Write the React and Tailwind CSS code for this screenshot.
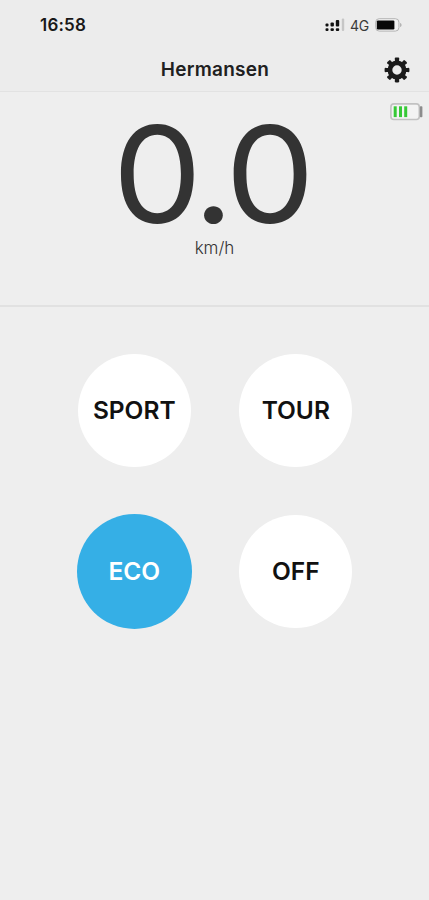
import clsx from "clsx";

const MODES = ["SPORT", "TOUR", "ECO", "OFF"];
const TEETH = [0, 45, 90, 135];

function SignalIcon() {
  return (
    <svg width="20" height="14" viewBox="0 0 20 14" fill="#111">
      <rect x="0.5" y="5.5" width="3" height="3" rx="1" />
      <rect x="5.5" y="4.5" width="3.4" height="4" rx="1" />
      <rect x="10.8" y="2" width="3.4" height="6.5" rx="1" />
      <rect x="16.8" y="0.5" width="2.4" height="12.5" rx="1" fill="#c6c6c6" />
      <rect x="0.5" y="10.2" width="3" height="2.8" rx="1" />
      <rect x="5.5" y="10.2" width="3.4" height="2.8" rx="1" />
      <rect x="10.8" y="10.2" width="3.4" height="2.8" rx="1" />
    </svg>
  );
}

function PhoneBattery() {
  return (
    <svg width="27" height="14" viewBox="0 0 27 14">
      <rect x="0.7" y="0.7" width="23.2" height="12.4" rx="3.5" fill="#f2f2f2" stroke="#b4b4b4" />
      <rect x="1.8" y="2.4" width="17.6" height="9" rx="1.2" fill="#080808" />
      <path d="M25 5v4c1-.3 1.600-1.100 1.600-2S26 5.300 25 5z" fill="#b4b4b4" />
    </svg>
  );
}

function GearIcon() {
  return (
    <svg width="26" height="26" viewBox="-13 -13 26 26" fill="none" stroke="#1b1b1b">
      <circle r="7.1" strokeWidth="4.8" />
      {TEETH.map((angle) => (
        <path
          key={angle}
          d="M0-11V-8M0 11V8"
          strokeWidth="4.2"
          strokeLinecap="butt"
          transform={`rotate(${angle})`}
        />
      ))}
      {TEETH.map((angle) => (
        <path
          key={angle}
          d="M-1.2-11.3H1.2M-1.2 11.3H1.2"
          strokeWidth="2.2"
          strokeLinecap="round"
          transform={`rotate(${angle})`}
        />
      ))}
    </svg>
  );
}

function BikeBattery() {
  return (
    <svg width="33" height="18" viewBox="0 0 33 18">
      <rect x="0.9" y="0.9" width="28.4" height="15.6" rx="3" fill="#f3f3f3" stroke="#c2c2c2" strokeWidth="1.6" />
      <rect x="29.8" y="3.2" width="2.6" height="11" rx="0.8" fill="#8c8c8c" />
      <g fill="#36c936">
        <rect x="3.7" y="3.3" width="3" height="10.8" />
        <rect x="9" y="3.3" width="3" height="10.8" />
        <rect x="14.2" y="3.3" width="3" height="10.8" />
      </g>
    </svg>
  );
}

function StatusBar() {
  return (
    <div className="flex h-[50px] items-center justify-between pr-[27px] pl-[40px]">
      <span className="pt-px text-[17px] font-semibold tracking-[0.2px] text-[#181818]">16:58</span>
      <div className="flex items-center">
        <SignalIcon />
        <span className="mr-[6px] ml-[5px] text-[14px] tracking-[-0.2px] text-[#3a3a3a]">4G</span>
        <PhoneBattery />
      </div>
    </div>
  );
}

function ModeButton({ label, active }) {
  return (
    <button
      className={clsx(
        "grid place-items-center rounded-full text-[24.5px] font-semibold",
        active ? "size-[115px] bg-[#35afe6] text-white" : "size-[113px] bg-white text-[#111]",
      )}
    >
      {label}
    </button>
  );
}

export default function App() {
  return (
    <div className="flex h-[900px] w-[429px] flex-col overflow-hidden bg-[#eee] font-['Inter','Liberation_Sans',sans-serif]">
      <header className="h-[92px] shrink-0 border-b border-[#e2e2e2] bg-[#ececec]">
        <StatusBar />
        <div className="grid h-[39px] grid-cols-[1fr_auto_1fr] items-center pr-[19px]">
          <h1 className="col-start-2 ml-[20px] pt-[2px] text-[19px] font-semibold tracking-[0.25px] text-[#202020]">
            Hermansen
          </h1>
          <button aria-label="Settings" className="justify-self-end">
            <GearIcon />
          </button>
        </div>
      </header>

      <section className="relative flex h-[215px] shrink-0 flex-col items-center border-b-2 border-[#e1e1e1]">
        <div className="absolute top-[11px] right-[6px]">
          <BikeBattery />
        </div>
        <div className="mt-[16px] mr-[7px] scale-x-[1.06] text-[134px] leading-[132px] font-[440] tracking-[-5px] text-[#333]">
          0.0
        </div>
        <div className="-mt-px text-[17px] leading-[18px] font-light text-[#333]">km/h</div>
      </section>

      <main className="mt-[23px] ml-[53.5px] grid w-[323px] auto-rows-[161px] grid-cols-2 place-items-center">
        {MODES.map((mode) => (
          <ModeButton key={mode} label={mode} active={mode === "ECO"} />
        ))}
      </main>
    </div>
  );
}
